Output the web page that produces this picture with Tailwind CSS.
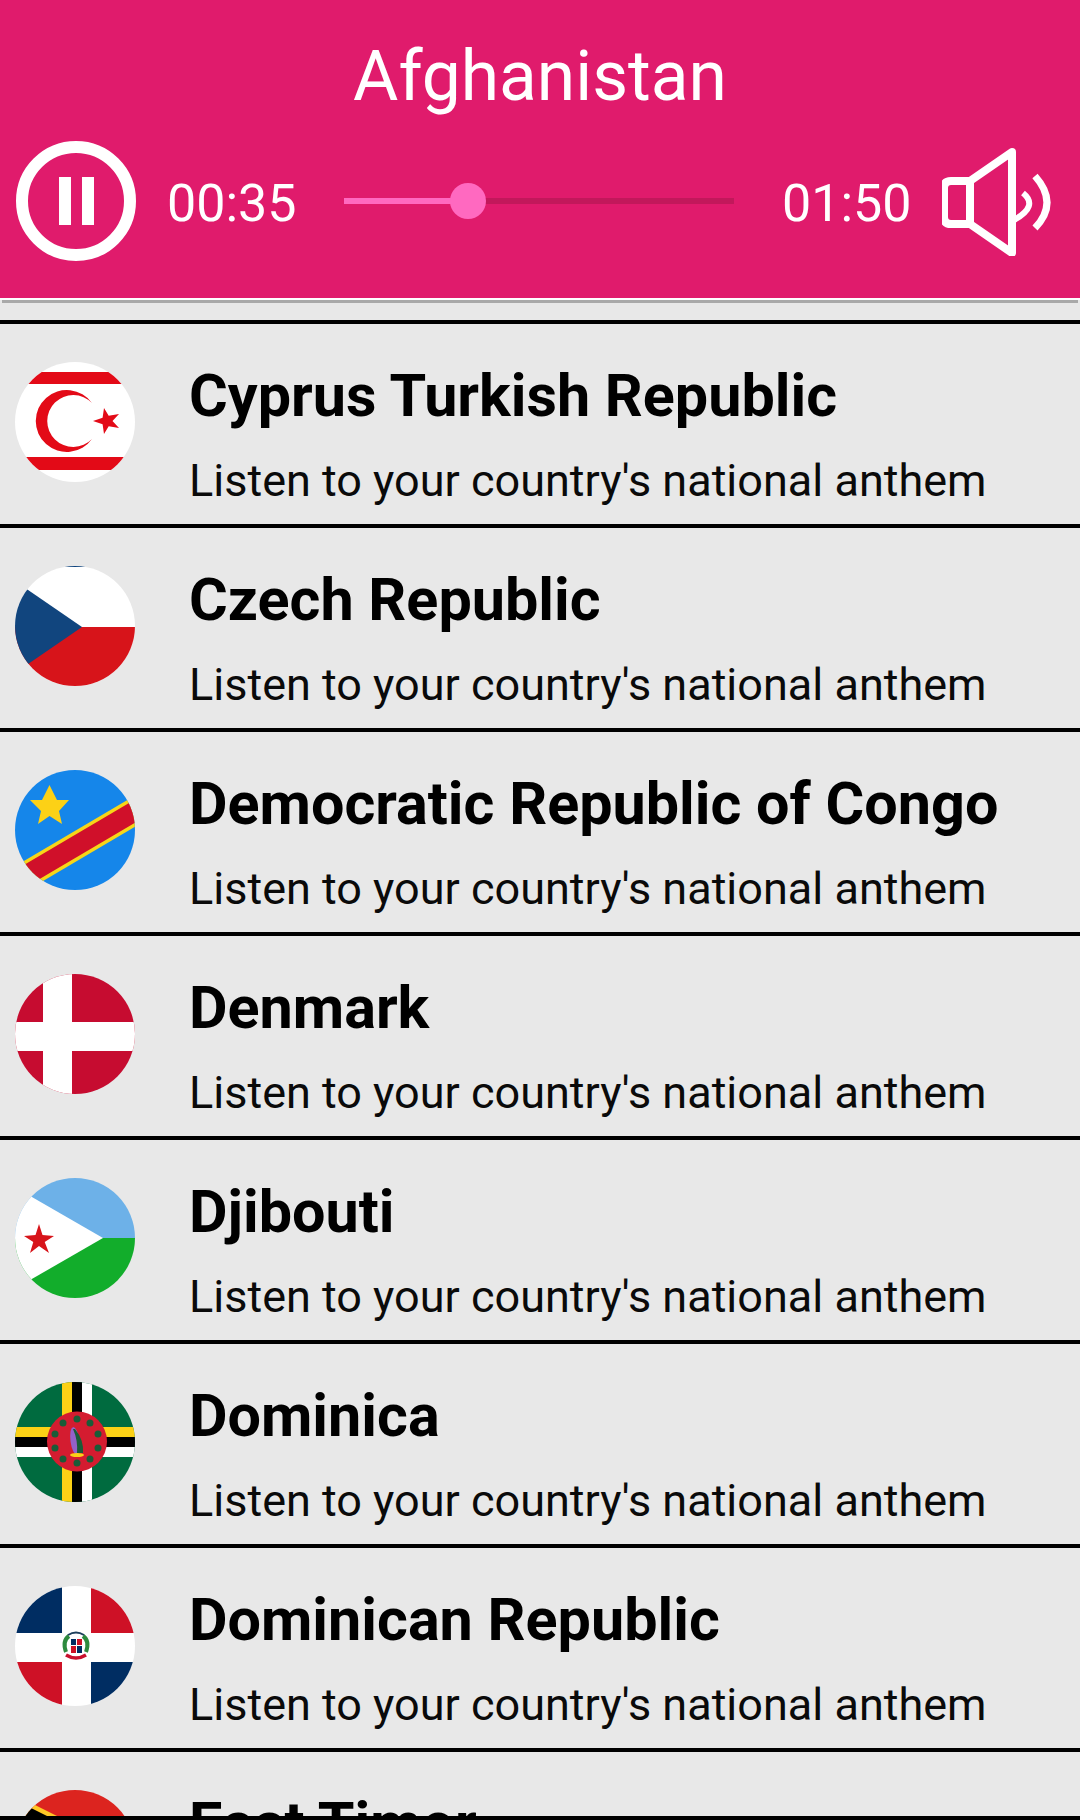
<!DOCTYPE html>
<html lang="en">
<head>
  <meta charset="UTF-8" />
  <meta name="viewport" content="width=device-width, initial-scale=1.0" />
  <title>National Anthems</title>
  <script src="https://cdn.jsdelivr.net/npm/@tailwindcss/browser@4"></script>
</head>
<body class="bg-[#e8e8e8] font-['Roboto',sans-serif]">
  <div class="h-[1820px] flex flex-col overflow-hidden">
    <!-- player -->
    <div class="h-[298px] shrink-0 bg-[#e01b6c] text-white">
      <div class="h-[140px] flex items-center justify-center pt-[14px] text-[69.5px] leading-none">Afghanistan</div>
      <div class="h-[122px] flex items-center pl-[16px]">
        <svg class="w-[120px] h-[120px] shrink-0" viewBox="0 0 120 120">
          <circle cx="60" cy="60" r="54" fill="none" stroke="#fff" stroke-width="12" />
          <rect x="43" y="36" width="12" height="48" fill="#fff" />
          <rect x="66" y="36" width="12" height="48" fill="#fff" />
        </svg>
        <div class="w-[128px] ml-[31px] pt-[6px] text-[52px] leading-none">00:35</div>
        <div class="relative w-[390px] h-[6px] ml-[49px] bg-[#c2185b]">
          <div class="h-full w-[124px] bg-[#ff69c0]"></div>
          <div class="absolute left-[106px] top-[-15px] w-[36px] h-[36px] rounded-full bg-[#ff69c0]"></div>
        </div>
        <div class="w-[128px] ml-[48px] pt-[6px] text-[52px] leading-none">01:50</div>
        <svg class="w-[110px] h-[110px] ml-[32px] shrink-0" viewBox="0 0 110 110" fill="none" stroke="#fff" stroke-width="8">
          <path d="M28 35 H9 Q2 35 2 42 V71 Q2 78 9 78 H28 L70 107 V6 Z" stroke-linejoin="round" />
          <path d="M28 35 V78" />
          <path d="M81 47 Q97 60 72 74" stroke-width="6" />
          <path d="M93 30 Q117 57 93 82" stroke-width="7" />
        </svg>
      </div>
    </div>
    <div class="h-[2px] shrink-0 bg-white"></div>
    <div class="h-[3px] shrink-0 mx-[2px] bg-[#a9a9a9]"></div>

    <!-- list -->
    <div class="flex-1 min-h-0 mt-[17px] overflow-hidden">
      <div class="h-[204px] border-t-4 border-black flex items-center pl-[15px] pb-[4px]">
        <svg class="w-[120px] h-[120px] shrink-0 rounded-full" viewBox="0 0 120 120">
          <rect width="120" height="120" fill="#fff" />
          <rect y="10" width="120" height="12" fill="#e30a17" />
          <rect y="95" width="120" height="13" fill="#e30a17" />
          <path d="M77 41 A31 31 0 1 0 77 77 A26 26 0 1 1 77 41 Z" fill="#e30a17" />
          <polygon points="78,59 87.6,55.8 89,46 93.7,53.8 104,52 97.5,59 104,66 93.7,64.2 89,72 87.6,62.2" fill="#e30a17" />
        </svg>
        <div class="ml-[54px] pt-[26px]">
          <div class="text-[59.3px] leading-[66px] font-bold text-black">Cyprus Turkish Republic</div>
          <div class="mt-[26px] text-[45px] leading-[52px] text-[#0a0a0a]">Listen to your country's national anthem</div>
        </div>
      </div>
      <div class="h-[204px] border-t-4 border-black flex items-center pl-[15px] pb-[4px]">
        <svg class="w-[120px] h-[120px] shrink-0 rounded-full" viewBox="0 0 120 120">
          <rect width="120" height="120" fill="#fff" />
          <rect y="61" width="120" height="59" fill="#d7141a" />
          <polygon points="67,61 -10,8 -10,114" fill="#11457e" />
          <rect x="50" width="20" height="1" fill="#11457e" />
        </svg>
        <div class="ml-[54px] pt-[26px]">
          <div class="text-[59.3px] leading-[66px] font-bold text-black">Czech Republic</div>
          <div class="mt-[26px] text-[45px] leading-[52px] text-[#0a0a0a]">Listen to your country's national anthem</div>
        </div>
      </div>
      <div class="h-[204px] border-t-4 border-black flex items-center pl-[15px] pb-[4px]">
        <svg class="w-[120px] h-[120px] shrink-0 rounded-full" viewBox="0 0 120 120">
          <rect width="120" height="120" fill="#1586ea" />
          <path d="M-10 117.8 L130 35.2" stroke="#f7d618" stroke-width="27" />
          <path d="M-10 117.8 L130 35.2" stroke="#d0102a" stroke-width="20" />
          <polygon points="34.5,15 42,30 54,30 44,41 47,54 34.5,46 23,54 26,41 15,30 27,30" fill="#fcd116" />
        </svg>
        <div class="ml-[54px] pt-[26px]">
          <div class="text-[59.3px] leading-[66px] font-bold text-black">Democratic Republic of Congo</div>
          <div class="mt-[26px] text-[45px] leading-[52px] text-[#0a0a0a]">Listen to your country's national anthem</div>
        </div>
      </div>
      <div class="h-[204px] border-t-4 border-black flex items-center pl-[15px] pb-[4px]">
        <svg class="w-[120px] h-[120px] shrink-0 rounded-full" viewBox="0 0 120 120">
          <rect width="120" height="120" fill="#c60c30" />
          <rect x="28" width="29" height="120" fill="#fff" />
          <rect y="48" width="120" height="29" fill="#fff" />
        </svg>
        <div class="ml-[54px] pt-[26px]">
          <div class="text-[59.3px] leading-[66px] font-bold text-black">Denmark</div>
          <div class="mt-[26px] text-[45px] leading-[52px] text-[#0a0a0a]">Listen to your country's national anthem</div>
        </div>
      </div>
      <div class="h-[204px] border-t-4 border-black flex items-center pl-[15px] pb-[4px]">
        <svg class="w-[120px] h-[120px] shrink-0 rounded-full" viewBox="0 0 120 120">
          <rect width="120" height="60" fill="#6db1e8" />
          <rect y="60" width="120" height="60" fill="#12ad2b" />
          <polygon points="88,60 -10,3.5 -10,116.5" fill="#fff" />
          <polygon points="24,46 27.5,57.1 39,58 29.7,63.9 34,75 24,68 15,75 18.3,63.9 9,58 20.5,57.1" fill="#d7141a" />
        </svg>
        <div class="ml-[54px] pt-[26px]">
          <div class="text-[59.3px] leading-[66px] font-bold text-black">Djibouti</div>
          <div class="mt-[26px] text-[45px] leading-[52px] text-[#0a0a0a]">Listen to your country's national anthem</div>
        </div>
      </div>
      <div class="h-[204px] border-t-4 border-black flex items-center pl-[15px] pb-[4px]">
        <svg class="w-[120px] h-[120px] shrink-0 rounded-full" viewBox="0 0 120 120">
          <rect width="120" height="120" fill="#006b3f" />
          <rect x="47" width="10" height="120" fill="#fcd116" />
          <rect x="57" width="10" height="120" fill="#000" />
          <rect x="67" width="10" height="120" fill="#fff" />
          <rect y="45" width="120" height="10" fill="#fcd116" />
          <rect y="55" width="120" height="10" fill="#000" />
          <rect y="65" width="120" height="10" fill="#fff" />
          <circle cx="62" cy="59.5" r="30" fill="#d41c30" />
          <g fill="#1a5c38">
            <circle cx="62" cy="37" r="3.5" />
            <circle cx="75" cy="41" r="3.5" />
            <circle cx="83" cy="52" r="3.5" />
            <circle cx="83" cy="66" r="3.5" />
            <circle cx="75" cy="77" r="3.5" />
            <circle cx="62" cy="81" r="3.5" />
            <circle cx="48" cy="77" r="3.5" />
            <circle cx="40" cy="66" r="3.5" />
            <circle cx="40" cy="52" r="3.5" />
            <circle cx="48" cy="41" r="3.5" />
          </g>
          <ellipse cx="60" cy="59" rx="4.5" ry="14" fill="#9461c9" transform="rotate(-8 60 59)" />
          <path d="M60 47 Q69 58 68 71 L62 71 Q63 58 58 47 Z" fill="#1a5c38" />
          <ellipse cx="62" cy="73" rx="7" ry="2" fill="#fcd116" />
        </svg>
        <div class="ml-[54px] pt-[26px]">
          <div class="text-[59.3px] leading-[66px] font-bold text-black">Dominica</div>
          <div class="mt-[26px] text-[45px] leading-[52px] text-[#0a0a0a]">Listen to your country's national anthem</div>
        </div>
      </div>
      <div class="h-[204px] border-t-4 border-black flex items-center pl-[15px] pb-[4px]">
        <svg class="w-[120px] h-[120px] shrink-0 rounded-full" viewBox="0 0 120 120">
          <rect width="120" height="120" fill="#fff" />
          <rect width="47" height="47" fill="#002d62" />
          <rect x="76" width="44" height="47" fill="#ce1126" />
          <rect y="76" width="47" height="44" fill="#ce1126" />
          <rect x="76" y="76" width="44" height="44" fill="#002d62" />
          <path d="M51 66 Q47 55 54 50 M71 66 Q75 55 68 50" fill="none" stroke="#2d8a3e" stroke-width="4" />
          <rect x="56" y="53" width="5" height="6" fill="#002d62" />
          <rect x="62" y="53" width="5" height="6" fill="#ce1126" />
          <rect x="56" y="60" width="5" height="7" fill="#ce1126" />
          <rect x="62" y="60" width="5" height="7" fill="#002d62" />
          <path d="M51 69 Q61 75 71 69" fill="none" stroke="#c8102e" stroke-width="3.5" />
          <path d="M53 49 Q61 44 69 49" fill="none" stroke="#1d3f5c" stroke-width="2" />
        </svg>
        <div class="ml-[54px] pt-[26px]">
          <div class="text-[59.3px] leading-[66px] font-bold text-black">Dominican Republic</div>
          <div class="mt-[26px] text-[45px] leading-[52px] text-[#0a0a0a]">Listen to your country's national anthem</div>
        </div>
      </div>
      <div class="h-[204px] border-t-4 border-black flex items-center pl-[15px] pb-[4px]">
        <svg class="w-[120px] h-[120px] shrink-0 rounded-full" viewBox="0 0 120 120">
          <rect width="120" height="120" fill="#dc241f" />
          <polygon points="-10,0 110,60 -10,120" fill="#ffc726" />
          <polygon points="-10,5 100,60 -10,115" fill="#000" />
        </svg>
        <div class="ml-[54px] pt-[26px]">
          <div class="text-[59.3px] leading-[66px] font-bold text-black">East Timor</div>
          <div class="mt-[26px] text-[45px] leading-[52px] text-[#0a0a0a]">Listen to your country's national anthem</div>
        </div>
      </div>
    </div>
    <div class="h-[4px] shrink-0 bg-black"></div>
  </div>
</body>
</html>
